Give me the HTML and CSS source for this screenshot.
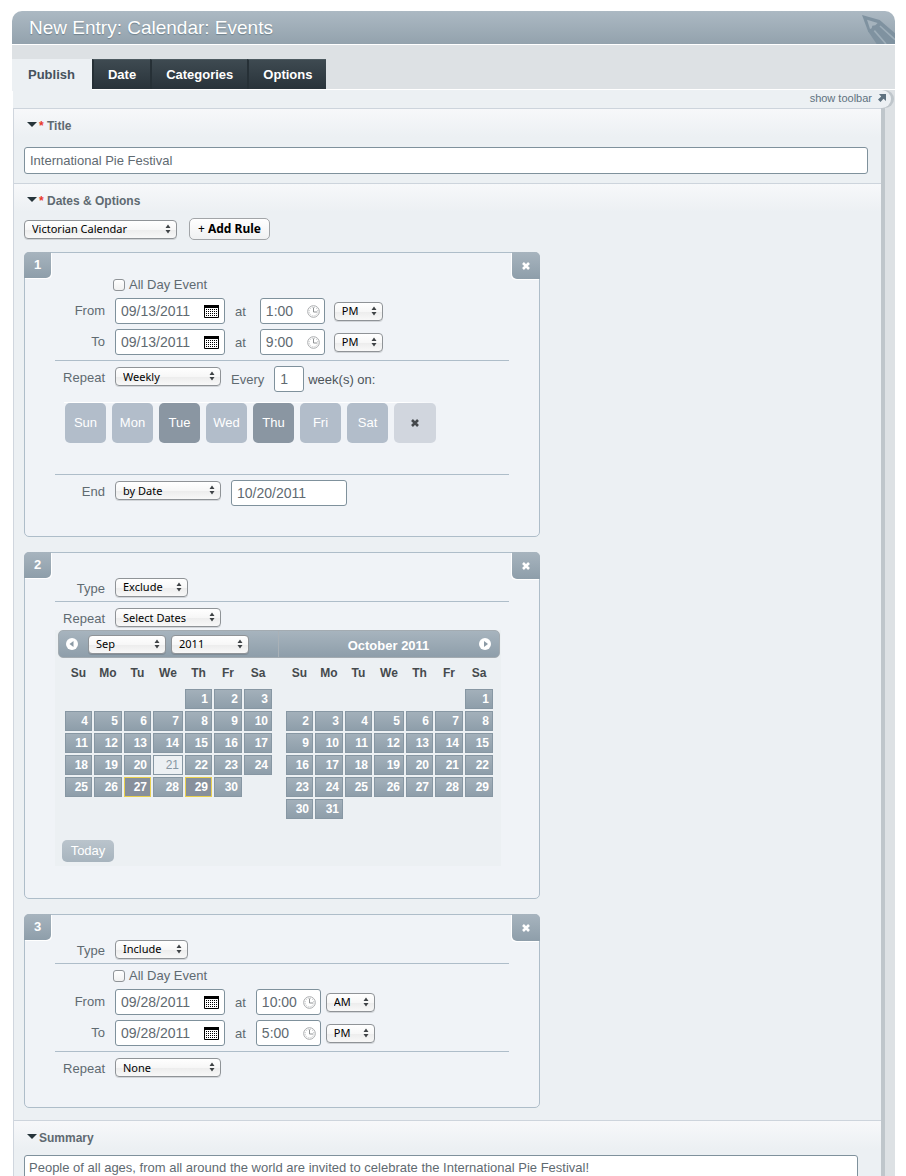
FILE: index.html
```html
<!DOCTYPE html>
<html lang="en">
<head>
<meta charset="utf-8">
<title>New Entry: Calendar: Events</title>
<link rel="stylesheet" href="styles.css">
</head>
<body>
<svg class="sprite" aria-hidden="true">
  <symbol id="arrows" viewBox="0 0 6 10"><path d="M3 0.5 5.5 4H0.5zM3 9.5 0.5 6h5z"/></symbol>
  <symbol id="cal" viewBox="0 0 15 13">
    <path fill="#fff" d="M0 0h15v13H0z"/>
    <path fill="none" stroke="#000" d="M.5.5h14v12H.5z"/>
    <path fill="#000" d="M0 0h15v3H0z"/>
    <path stroke="#000" stroke-dasharray="1 1" d="M2 4.500h11M2 6.500h11M2 8.500h11M2 10.500h11"/>
  </symbol>
  <symbol id="clock" viewBox="0 0 13 13">
    <circle cx="6.5" cy="6.5" r="5.8" fill="#fff" stroke="#a9abad"/>
    <circle cx="6.5" cy="6.5" r="4.3" fill="none" stroke="#b9bbbd" stroke-dasharray="1 1.25"/>
    <path fill="none" stroke="#8f9294" d="M6.5 2.5v4.5H10"/>
  </symbol>
  <symbol id="cross" viewBox="0 0 8 8"><path fill="none" stroke="currentColor" stroke-width="2.6" d="M1 1l6 6M7 1 1 7"/></symbol>
</svg>
<div class="page">
  <header class="titlebar">
    <h1>New Entry: Calendar: Events</h1>
    <svg class="pencil" viewBox="0 0 99 87" aria-hidden="true">
      <path fill="#7f92a0" d="M0 0 53 15 99 55V87H44L18 49Z"/>
      <path fill="#a5b3bd" d="M15 14 47 24 40 31 31 32 29 40 24 42Z"/>
      <path fill="none" stroke="#9dadb8" stroke-width="5" d="M37 47 72 87M54 33 99 74"/>
    </svg>
  </header>
  <nav class="tabs">
    <a class="tab tab--active" href="#publish">Publish</a>
    <a class="tab" href="#date">Date</a>
    <a class="tab" href="#categories">Categories</a>
    <a class="tab" href="#options">Options</a>
  </nav>
  <div class="body">
    <div class="toolbar"><a href="#toolbar">show toolbar
      <svg viewBox="0 0 8 8" aria-hidden="true"><path fill="#5f7280" d="M1 0h7v7L5.500 4.800 2.500 8 0 5.500 3.200 2.500z"/></svg></a></div>
    <main class="panel" id="publish">
      <section class="section">
        <h2 class="section-title"><i class="caret"></i><label for="title"><b>*</b> Title</label></h2>
        <input class="text title-input" id="title" value="International Pie Festival">
      </section>

      <section class="section section--rules">
        <h2 class="section-title"><i class="caret"></i><span><b>*</b> Dates &amp; Options</span></h2>
        <div class="actions">
          <span class="select select--calendar"><select aria-label="Calendar"><option>Victorian Calendar</option></select><svg><use href="#arrows"/></svg></span>
          <button class="add" type="button">+ <strong>Add Rule</strong></button>
        </div>

        <article class="rule">
          <span class="number">1</span>
          <button class="remove" type="button" aria-label="Remove rule 1"><svg><use href="#cross"/></svg></button>
          <label class="check"><input type="checkbox"> All Day Event</label>
          <div class="row row--spaced">
            <label class="name" for="f1">From</label>
            <span class="field field--date"><input id="f1" value="09/13/2011"><svg class="cal"><use href="#cal"/></svg></span>
            <span class="at">at</span>
            <span class="field field--time"><input aria-label="From time" value="1:00"><svg class="clock"><use href="#clock"/></svg></span>
            <span class="select select--meridiem"><select aria-label="From AM or PM"><option>PM</option></select><svg><use href="#arrows"/></svg></span>
          </div>
          <div class="row row--spaced">
            <label class="name" for="t1">To</label>
            <span class="field field--date"><input id="t1" value="09/13/2011"><svg class="cal"><use href="#cal"/></svg></span>
            <span class="at">at</span>
            <span class="field field--time"><input aria-label="To time" value="9:00"><svg class="clock"><use href="#clock"/></svg></span>
            <span class="select select--meridiem"><select aria-label="To AM or PM"><option>PM</option></select><svg><use href="#arrows"/></svg></span>
          </div>
          <hr>
          <div class="row row--choice">
            <label class="name" for="r1">Repeat</label>
            <span class="select select--wide"><select id="r1"><option>Weekly</option></select><svg><use href="#arrows"/></svg></span>
            <label class="every" for="n1">Every</label>
            <span class="field field--count"><input id="n1" value="1"></span>
            <span class="unit">week(s) on:</span>
          </div>
          <div class="days">
            <button type="button">Sun</button><button type="button">Mon</button><button type="button" class="on">Tue</button><button type="button">Wed</button><button type="button" class="on">Thu</button><button type="button">Fri</button><button type="button">Sat</button><button type="button" class="clear" aria-label="Clear days"><svg><use href="#cross"/></svg></button>
          </div>
          <hr>
          <div class="row row--choice row--last">
            <label class="name" for="e1">End</label>
            <span class="select select--wide"><select id="e1"><option>by Date</option></select><svg><use href="#arrows"/></svg></span>
            <span class="field field--end"><input aria-label="End date" value="10/20/2011"></span>
          </div>
        </article>

        <article class="rule">
          <span class="number">2</span>
          <button class="remove" type="button" aria-label="Remove rule 2"><svg><use href="#cross"/></svg></button>
          <div class="row row--type">
            <label class="name" for="y2">Type</label>
            <span class="select select--type"><select id="y2"><option>Exclude</option></select><svg><use href="#arrows"/></svg></span>
          </div>
          <hr>
          <div class="row row--choice row--tight">
            <label class="name" for="r2">Repeat</label>
            <span class="select select--wide"><select id="r2"><option>Select Dates</option></select><svg><use href="#arrows"/></svg></span>
          </div>
          <div class="picker">
            <div class="picker-head">
              <div class="picker-left">
                <button class="step" type="button" aria-label="Previous month"><svg viewBox="0 0 12 12"><circle cx="6" cy="6" r="6" fill="#fff"/><path fill="#8b9aa5" d="M7.500 3v6l-4-3z"/></svg></button>
                <span class="select select--month"><select aria-label="Month"><option>Sep</option></select><svg><use href="#arrows"/></svg></span>
                <span class="select select--month"><select aria-label="Year"><option>2011</option></select><svg><use href="#arrows"/></svg></span>
              </div>
              <div class="picker-right">
                <span>October 2011</span>
                <button class="step" type="button" aria-label="Next month"><svg viewBox="0 0 12 12"><circle cx="6" cy="6" r="6" fill="#fff"/><path fill="#8b9aa5" d="M5 3v6l4-3z"/></svg></button>
              </div>
            </div>
            <div class="months">
              <table class="month">
                <colgroup><col class="c27"><col class="c28"><col class="c27"><col class="c30"><col class="c27"><col class="c28"><col class="c28"></colgroup>
                <thead><tr><th>Su</th><th>Mo</th><th>Tu</th><th>We</th><th>Th</th><th>Fr</th><th>Sa</th></tr></thead>
                <tbody>
                <tr><td></td><td></td><td></td><td></td><td><button>1</button></td><td><button>2</button></td><td><button>3</button></td></tr>
                <tr><td><button>4</button></td><td><button>5</button></td><td><button>6</button></td><td><button>7</button></td><td><button>8</button></td><td><button>9</button></td><td><button>10</button></td></tr>
                <tr><td><button>11</button></td><td><button>12</button></td><td><button>13</button></td><td><button>14</button></td><td><button>15</button></td><td><button>16</button></td><td><button>17</button></td></tr>
                <tr><td><button>18</button></td><td><button>19</button></td><td><button>20</button></td><td><button class="today">21</button></td><td><button>22</button></td><td><button>23</button></td><td><button>24</button></td></tr>
                <tr><td><button>25</button></td><td><button>26</button></td><td><button class="picked">27</button></td><td><button>28</button></td><td><button class="picked">29</button></td><td><button>30</button></td><td></td></tr>
                </tbody>
              </table>
              <table class="month">
                <colgroup><col class="c27"><col class="c28"><col class="c27"><col class="c30"><col class="c27"><col class="c28"><col class="c28"></colgroup>
                <thead><tr><th>Su</th><th>Mo</th><th>Tu</th><th>We</th><th>Th</th><th>Fr</th><th>Sa</th></tr></thead>
                <tbody>
                <tr><td></td><td></td><td></td><td></td><td></td><td></td><td><button>1</button></td></tr>
                <tr><td><button>2</button></td><td><button>3</button></td><td><button>4</button></td><td><button>5</button></td><td><button>6</button></td><td><button>7</button></td><td><button>8</button></td></tr>
                <tr><td><button>9</button></td><td><button>10</button></td><td><button>11</button></td><td><button>12</button></td><td><button>13</button></td><td><button>14</button></td><td><button>15</button></td></tr>
                <tr><td><button>16</button></td><td><button>17</button></td><td><button>18</button></td><td><button>19</button></td><td><button>20</button></td><td><button>21</button></td><td><button>22</button></td></tr>
                <tr><td><button>23</button></td><td><button>24</button></td><td><button>25</button></td><td><button>26</button></td><td><button>27</button></td><td><button>28</button></td><td><button>29</button></td></tr>
                <tr><td><button>30</button></td><td><button>31</button></td><td></td><td></td><td></td><td></td><td></td></tr>
                </tbody>
              </table>
            </div>
            <button class="go-today" type="button">Today</button>
          </div>
        </article>

        <article class="rule">
          <span class="number">3</span>
          <button class="remove" type="button" aria-label="Remove rule 3"><svg><use href="#cross"/></svg></button>
          <div class="row row--type">
            <label class="name" for="y3">Type</label>
            <span class="select select--type"><select id="y3"><option>Include</option></select><svg><use href="#arrows"/></svg></span>
          </div>
          <hr>
          <label class="check"><input type="checkbox"> All Day Event</label>
          <div class="row">
            <label class="name" for="f3">From</label>
            <span class="field field--date"><input id="f3" value="09/28/2011"><svg class="cal"><use href="#cal"/></svg></span>
            <span class="at">at</span>
            <span class="field field--time"><input aria-label="From time" value="10:00"><svg class="clock"><use href="#clock"/></svg></span>
            <span class="select select--meridiem"><select aria-label="From AM or PM"><option>AM</option></select><svg><use href="#arrows"/></svg></span>
          </div>
          <div class="row">
            <label class="name" for="t3">To</label>
            <span class="field field--date"><input id="t3" value="09/28/2011"><svg class="cal"><use href="#cal"/></svg></span>
            <span class="at">at</span>
            <span class="field field--time"><input aria-label="To time" value="5:00"><svg class="clock"><use href="#clock"/></svg></span>
            <span class="select select--meridiem"><select aria-label="To AM or PM"><option>PM</option></select><svg><use href="#arrows"/></svg></span>
          </div>
          <hr>
          <div class="row row--choice">
            <label class="name" for="r3">Repeat</label>
            <span class="select select--wide"><select id="r3"><option>None</option></select><svg><use href="#arrows"/></svg></span>
          </div>
        </article>
      </section>

      <section class="section section--summary">
        <h2 class="section-title"><i class="caret"></i><label for="summary">Summary</label></h2>
        <textarea class="text summary" id="summary">People of all ages, from all around the world are invited to celebrate the International Pie Festival!</textarea>
      </section>
    </main>
  </div>
</div>
</body>
</html>
```
FILE: styles.css
```css
* { box-sizing: border-box; }
html { overflow: hidden; height: 100%; }
body {
  margin: 0;
  height: 100%;
  overflow: hidden;
  background: #fff;
  color: #5f6a71;
  font: 13px/18px "Liberation Sans", Arial, sans-serif;
}
button, input, select, textarea { font: inherit; color: inherit; margin: 0; }
.sprite { position: absolute; width: 0; height: 0; }
.page { padding: 11px 11px 0 12px; }

/* Title bar and tabs */
.titlebar {
  display: flex;
  justify-content: space-between;
  align-items: flex-end;
  height: 33px;
  padding-left: 17px;
  border-radius: 10px 10px 0 0;
  background: linear-gradient(#acb9c3, #93a2ad);
  overflow: hidden;
}
.titlebar h1 {
  margin: 0;
  font-size: 19px;
  font-weight: normal;
  line-height: 33px;
  color: #fff;
  text-shadow: 0 1px 1px #6f808c;
}
.pencil { width: 33px; height: 29px; }
.tabs {
  display: flex;
  height: 46px;
  padding-top: 14px;
  border-top: 1px solid #fff;
  border-bottom: 1px solid #fff;
  background: #dde1e4;
}
.tab {
  padding: 0 14px;
  border-top: 1px solid #4d5a60;
  border-left: 2px solid #263036;
  background: linear-gradient(#3e4a51, #29333a);
  color: #fff;
  font-weight: bold;
  line-height: 29px;
  text-decoration: none;
}
.tab--active {
  padding: 0 17px 0 16px;
  height: 32px;
  border: 0;
  background: #ecf0f3;
  color: #46525c;
  line-height: 31px;
}

/* Body frame */
.body { background: #dde1e4; padding-right: 10px; border-left: 1px solid #fff; }
.toolbar {
  margin-right: -6px;
  height: 18px;
  border-radius: 0 9px 9px 0;
  background: #ecf0f3;
  box-shadow: 3px 0 0 #bfc6cb;
  font-size: 11px;
  text-align: right;
}
.toolbar a {
  display: flex;
  align-items: center;
  justify-content: flex-end;
  gap: 6px;
  padding-right: 5px;
  line-height: 16px;
  color: #5f7280;
  text-decoration: none;
}
.toolbar svg { width: 8px; height: 8px; }
.panel {
  border-left: 1px solid #d0d6de;
  border-right: 4px solid #bfc6cb;
  background: #ecf0f3;
}
.section {
  padding: 8px 13px 9px 10px;
  border-top: 1px solid #cdd4dc;
  background: linear-gradient(#f7f8fa, #ecf0f3 28px);
}
.section--rules { padding-bottom: 12px; }
.section--summary { padding: 8px 23px 0 10px; }
.section-title {
  display: flex;
  align-items: center;
  gap: 2px;
  margin: 0 0 12px;
  font-size: 12px;
  line-height: 18px;
}
.section--rules .section-title, .section--summary .section-title { margin-bottom: 8px; }
.section-title b { color: #e8382b; }
.caret {
  margin: 0 0 3px 3px;
  border: 5px solid transparent;
  border-top-color: #26343a;
  border-bottom: 0;
}
.text {
  display: block;
  width: 100%;
  border: 1px solid #7f919c;
  border-radius: 3px;
  background: #fff;
  outline: 0;
}
.title-input { height: 27px; padding: 0 5px; }
.summary { height: 90px; padding: 3px 4px; resize: none; }

/* Form controls */
.actions { display: flex; align-items: center; gap: 12px; margin-bottom: 12px; }
.add {
  height: 22px;
  padding: 0 8px;
  border: 1px solid #a2a5a8;
  border-radius: 5px;
  background: linear-gradient(#fff, #f0f1f2);
  color: #000;
  font: 12px/18px "Noto Sans", sans-serif;
}
.select { position: relative; display: flex; flex: none; height: 19px; }
.select select {
  appearance: none;
  width: 100%;
  padding: 0 7px;
  border: 1px solid #8f9397;
  border-radius: 4px;
  background: linear-gradient(#fff, #f7f7f7 50%, #ececec 51%, #f8f8f8);
  box-shadow: 0 1px 0 rgba(0, 0, 0, .12);
  color: #000;
  font: 11px/16px "Noto Sans", sans-serif;
}
.select svg {
  position: absolute;
  right: 6px;
  top: 4px;
  width: 6px;
  height: 10px;
  fill: #3f4346;
  pointer-events: none;
}
.select--calendar { width: 153px; }
.select--wide { width: 106px; }
.select--type { width: 73px; }
.select--month { width: 78px; }
.select--meridiem { width: 49px; margin-left: 5px; }
.field {
  display: flex;
  align-items: center;
  height: 26px;
  border: 1px solid #7f919c;
  border-radius: 3px;
  background: #fff;
}
.field input {
  flex: 1;
  min-width: 0;
  width: 100%;
  padding: 0 0 0 5px;
  border: 0;
  background: none;
  outline: 0;
  font-size: 14px;
}
.field--date { width: 110px; }
.field--time { width: 65px; }
.field--count { width: 30px; margin: 0 4px 0 10px; }
.field--end { width: 116px; margin-left: 10px; }
.cal { flex: none; width: 15px; height: 13px; margin-right: 5px; }
.clock { flex: none; width: 13px; height: 13px; margin-right: 4px; }

/* Rule boxes */
.rule {
  position: relative;
  max-width: 516px;
  margin-bottom: 15px;
  padding: 22px 30px 24px;
  border: 1px solid #aebdc9;
  border-radius: 5px;
  background: #f0f3f7;
}
.rule:last-child { margin-bottom: 0; }
.number, .remove {
  position: absolute;
  top: -1px;
  display: flex;
  align-items: center;
  justify-content: center;
  width: 27px;
  height: 26px;
  padding: 0;
  border: 0;
  background: linear-gradient(#a7b4be, #8e9eaa);
  color: #fff;
  font-weight: bold;
}
.number { left: -1px; border-radius: 5px 0; box-shadow: 1px 1px 0 #fff; }
.remove { right: -1px; width: 28px; height: 27px; border-radius: 0 5px; box-shadow: -1px 1px 0 #fff; }
.remove svg, .clear svg { width: 8px; height: 8px; }
.rule hr { height: 1px; margin: 0; border: 0; background: #aebdc9; }
.check { display: flex; align-items: center; gap: 4px; height: 20px; margin: 0 0 3px 58px; }
.check input {
  appearance: none;
  width: 12px;
  height: 12px;
  border: 1px solid #8f9397;
  border-radius: 3px;
  background: linear-gradient(#fff, #f1f1f1);
}
hr + .check { margin-top: 2px; }
.row { display: flex; align-items: center; margin-bottom: 5px; }
.name { flex: none; width: 50px; margin-right: 10px; text-align: right; }
.at { margin: 0 10px; padding-top: 2px; }
.row--spaced .at { margin-right: 14px; }
.row--spaced .select--meridiem { margin-left: 9px; }
.every { margin-left: 10px; }
.row--type, .row--choice { min-height: 26px; margin: 0; }
.row--type .name { padding-top: 2px; }
.row--type .select { margin-bottom: 2px; }
.row--choice { align-items: flex-start; margin-top: 5px; }
.row--choice .name { margin-top: 3px; }
.row--choice .select { margin-top: 1px; }
.row--choice .every, .row--choice .unit { align-self: center; padding-top: 2px; }
.row--choice .unit { color: #4c5459; }
.row--tight { min-height: 23px; }
.row--last { margin-bottom: 6px; }
.days {
  display: flex;
  gap: 6px;
  margin: 10px 0 31px 9px;
  padding: 1px 0 0 1px;
  background: linear-gradient(90deg, #fff 90%, transparent) 0 0 / 377px 1px no-repeat;
}
.days button {
  width: 41px;
  height: 40px;
  padding: 0;
  border: 0;
  border-radius: 5px;
  background: #b2bdca;
  color: #fff;
}
.days .on { background: #8a96a2; }
.days .clear { width: 42px; background: #d1d6de; color: #45494c; }

/* Date picker */
.picker { padding: 0 1px 4px 3px; margin: 0 8px 8px 0; background: #ecf0f3; }
.picker-head {
  display: flex;
  height: 28px;
  border: 1px solid #a3abb1;
  border-radius: 5px;
  background: linear-gradient(#a7b4be, #8e9eaa);
  color: #fff;
  font-weight: bold;
}
.picker-left, .picker-right { display: flex; align-items: center; gap: 5px; }
.picker-left { width: 220px; padding-left: 7px; border-right: 1px solid #a9b1b7; }
.picker-left .step { margin-right: 5px; }
.picker-right { flex: 1; padding-right: 8px; }
.picker-right span { flex: 1; padding: 3px 0 0 24px; text-align: center; }
.step { width: 12px; height: 12px; padding: 0; border: 0; background: none; font-size: 0; }
.step svg { width: 12px; height: 12px; }
.months { display: flex; align-items: flex-start; gap: 10px; padding: 4px 0 19px 5px; }
.month { flex: none; width: 211px; border-spacing: 2px; table-layout: fixed; font-size: 12px; }
.c27 { width: 27px; }
.c28 { width: 28px; }
.c30 { width: 30px; }
.month th { height: 23px; padding: 0; vertical-align: top; color: #454a4d; }
.month td { height: 20px; padding: 0; }
.month button {
  display: block;
  width: 100%;
  height: 20px;
  padding: 0 3px;
  border: 1px solid #8797a3;
  background: linear-gradient(#a3b0ba, #8e9eaa);
  color: #fff;
  font-weight: bold;
  line-height: 18px;
  text-align: right;
}
.month .today { background: #ecf0f3; color: #8797a3; font-weight: normal; }
.month .picked { border-color: #e8cf4d; background: #878f9b; }
.go-today {
  display: block;
  width: 52px;
  height: 22px;
  margin-left: 4px;
  padding: 0;
  border: 0;
  border-radius: 5px;
  background: linear-gradient(#bac4cc, #a7b4be);
  color: #fff;
}
```
